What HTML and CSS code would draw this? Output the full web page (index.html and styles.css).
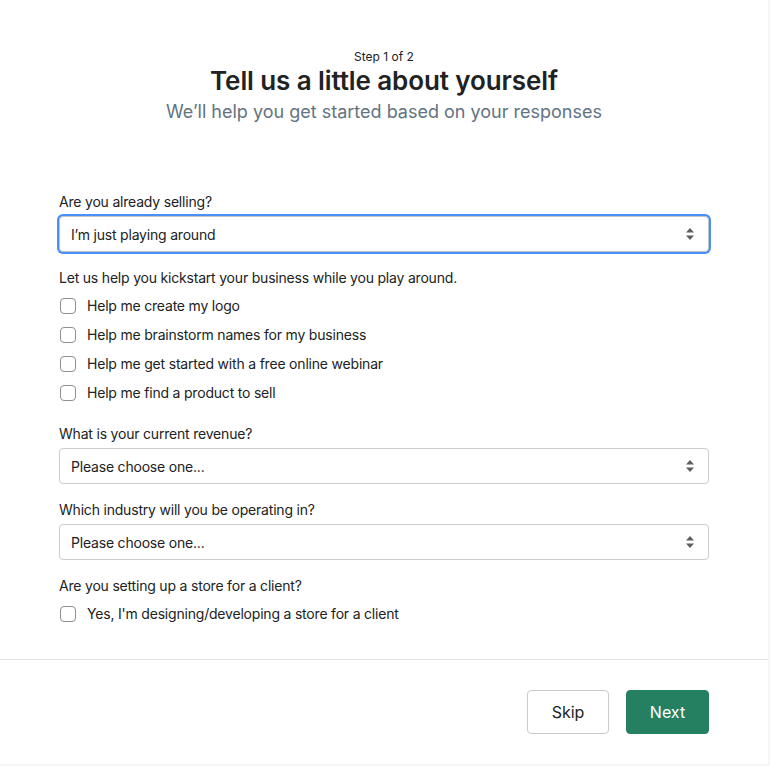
FILE: index.html
```html
<!DOCTYPE html>
<html lang="en">
<head>
<meta charset="utf-8">
<title>Tell us a little about yourself</title>
<link rel="stylesheet" href="styles.css">
</head>
<body>
<div class="card">
  <div class="body">
    <header class="head">
      <p class="step">Step 1 of 2</p>
      <h1 class="title">Tell us a little about yourself</h1>
      <p class="subtitle">We’ll help you get started based on your responses</p>
    </header>

    <div class="form">
      <div class="field">
        <label class="label" for="selling">Are you already selling?</label>
        <div class="select-wrap focused">
          <select id="selling" class="select"><option>I’m just playing around</option></select>
          <svg class="arrows" width="10" height="14" viewBox="0 0 10 14"><path d="M5 1 L9 5.5 H1 Z M5 13 L9 8.5 H1 Z" fill="#5c5f62"/></svg>
        </div>
      </div>

      <div class="group">
        <p class="help">Let us help you kickstart your business while you play around.</p>
        <div class="checks">
          <label class="check"><span class="box"></span>Help me create my logo</label>
          <label class="check"><span class="box"></span>Help me brainstorm names for my business</label>
          <label class="check"><span class="box"></span>Help me get started with a free online webinar</label>
          <label class="check"><span class="box"></span>Help me find a product to sell</label>
        </div>
      </div>

      <div class="field spaced">
        <label class="label" for="revenue">What is your current revenue?</label>
        <div class="select-wrap">
          <select id="revenue" class="select"><option>Please choose one...</option></select>
          <svg class="arrows" width="10" height="14" viewBox="0 0 10 14"><path d="M5 1 L9 5.5 H1 Z M5 13 L9 8.5 H1 Z" fill="#5c5f62"/></svg>
        </div>
      </div>

      <div class="field">
        <label class="label" for="industry">Which industry will you be operating in?</label>
        <div class="select-wrap">
          <select id="industry" class="select"><option>Please choose one...</option></select>
          <svg class="arrows" width="10" height="14" viewBox="0 0 10 14"><path d="M5 1 L9 5.5 H1 Z M5 13 L9 8.5 H1 Z" fill="#5c5f62"/></svg>
        </div>
      </div>

      <div class="group">
        <p class="help">Are you setting up a store for a client?</p>
        <div class="checks">
          <label class="check"><span class="box"></span>Yes, I'm designing/developing a store for a client</label>
        </div>
      </div>
    </div>
  </div>

  <footer class="foot">
    <button class="btn skip">Skip</button>
    <button class="btn next">Next</button>
  </footer>
</div>
</body>
</html>
```

FILE: styles.css
```css
html, body {
  margin: 0;
  padding: 0;
  background: #f6f6f7;
}
body {
  font-family: Inter, "Noto Sans", "Liberation Sans", sans-serif;
  color: #202223;
}
.card {
  width: 768px;
  height: 764px;
  background: #ffffff;
  display: flex;
  flex-direction: column;
}
.body {
  padding: 49px 59px 0;
  height: 660px;
  box-sizing: border-box;
  border-bottom: 1px solid #e1e3e5;
  flex: none;
}
.head {
  text-align: center;
}
.step {
  margin: 0;
  font-size: 12px;
  line-height: 16px;
  color: #202223;
}
.title {
  margin: 0;
  font-size: 26px;
  line-height: 32px;
  font-weight: 600;
  letter-spacing: -0.1px;
  color: #202223;
}
.subtitle {
  margin: 3px 0 0;
  font-size: 18px;
  line-height: 24px;
  color: #637381;
  font-weight: 400;
}
.form {
  margin-top: 68px;
  display: flex;
  flex-direction: column;
  gap: 16px;
  letter-spacing: -0.2px;
}
.field {
  display: flex;
  flex-direction: column;
  gap: 4px;
}
.field.spaced {
  margin-top: 5px;
}
.label, .help {
  margin: 0;
  font-size: 14px;
  line-height: 20px;
  color: #202223;
}
.select-wrap {
  position: relative;
  height: 36px;
}
.select {
  appearance: none;
  -webkit-appearance: none;
  width: 100%;
  height: 36px;
  box-sizing: border-box;
  border: 1px solid #c9cccf;
  border-radius: 4px;
  background: #ffffff;
  padding: 0 30px 0 11px;
  font-family: inherit;
  font-size: 14px;
  letter-spacing: -0.2px;
  color: #202223;
  outline: none;
}
.focused .select {
  box-shadow: 0 0 0 2px #4a8ef7;
  border-color: #bfc4c8;
}
.arrows {
  position: absolute;
  right: 14px;
  top: 11px;
  pointer-events: none;
}
.group {
  display: flex;
  flex-direction: column;
  gap: 8px;
}
.checks {
  display: flex;
  flex-direction: column;
  gap: 9px;
}
.check {
  display: flex;
  align-items: center;
  gap: 11px;
  font-size: 14px;
  line-height: 20px;
  color: #202223;
}
.box {
  width: 16px;
  height: 16px;
  box-sizing: border-box;
  border: 1.5px solid #8c9196;
  border-radius: 4px;
  margin-left: 1px;
  background: #fff;
  flex: none;
}
.foot {
  display: flex;
  justify-content: flex-end;
  gap: 17px;
  padding: 30px 59px 0;
}
.btn {
  height: 44px;
  border-radius: 4px;
  font-family: inherit;
  font-size: 16px;
  cursor: pointer;
}
.skip {
  width: 82px;
  background: #ffffff;
  border: 1px solid #c9cccf;
  color: #202223;
}
.next {
  width: 83px;
  background: #258061;
  border: 1px solid #258061;
  color: #ffffff;
}
```
